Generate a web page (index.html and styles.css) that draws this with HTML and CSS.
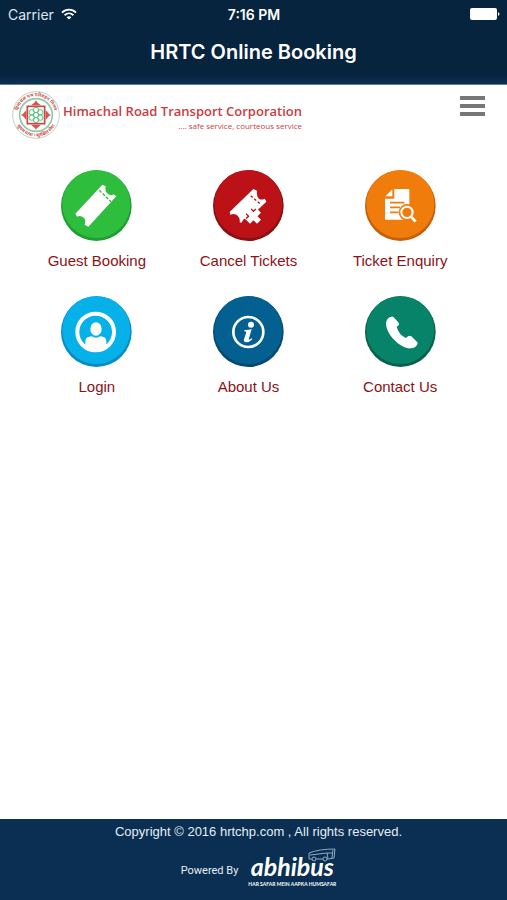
FILE: index.html
```html
<!DOCTYPE html>
<html lang="en">
<head>
  <meta charset="UTF-8">
  <meta name="viewport" content="width=device-width, initial-scale=1">
  <title>HRTC Online Booking</title>
  <link rel="stylesheet" href="styles.css">
</head>
<body>
  <header class="app-header">
    <div class="status-bar">
      <span class="carrier">Carrier
        <svg class="wifi" viewBox="0 0 16 12" aria-hidden="true">
          <path d="M1 4.6C5 .6 11 .6 15 4.6M3.6 7.2c2.6-2.5 6.2-2.5 8.8 0" fill="none" stroke="#fff" stroke-width="1.9"/>
          <path d="M5.6 9.2c1.4-1.3 3.4-1.3 4.8 0L8 11.6z" fill="#fff"/>
        </svg>
      </span>
      <span class="time">7:16 PM</span>
      <svg class="battery" viewBox="0 0 30 12" aria-hidden="true">
        <rect width="27" height="12" rx="2" fill="#fff"/>
        <path d="M28 4c2 1 2 3 0 4z" fill="#fff"/>
      </svg>
    </div>
    <h1>HRTC Online Booking</h1>
  </header>

  <div class="brand-bar">
    <a href="#" class="brand">
      <svg class="emblem" viewBox="0 0 144 144" aria-hidden="true">
        <defs>
          <path id="arcTop" d="M16 72a56 56 0 0 1 112 0"/>
          <path id="arcBottom" d="M7 72a65 65 0 0 0 130 0"/>
        </defs>
        <circle cx="72" cy="72" r="70" fill="none" stroke="#b5d6c0" stroke-width="3"/>
        <circle cx="72" cy="72" r="49" fill="none" stroke="#8ccba6" stroke-width="5"/>
        <text class="emblem-text"><textPath href="#arcTop" startOffset="50%">हिमाचल पथ परिवहन निगम</textPath></text>
        <text class="emblem-text"><textPath href="#arcBottom" startOffset="50%">सुगम यात्रा । सुरक्षित सेवा</textPath></text>
        <path d="M72 27c3 9 9 9 14 16H58c5-7 11-7 14-16zM72 117c3-9 9-9 14-16H58c5 7 11 7 14 16zM27 72c9-3 9-9 16-14v28c-7-5-7-11-16-14zM117 72c-9-3-9-9-16-14v28c7-5 7-11 16-14z" fill="#d9534f"/>
        <rect x="46" y="46" width="52" height="52" fill="#f4fbf5" stroke="#d04545" stroke-width="5"/>
        <g fill="none" stroke="#5cc08a" stroke-width="3">
          <circle cx="72" cy="72" r="8"/>
          <circle cx="72" cy="57" r="8"/>
          <circle cx="72" cy="87" r="8"/>
          <circle cx="59" cy="64" r="8"/>
          <circle cx="85" cy="64" r="8"/>
          <circle cx="59" cy="80" r="8"/>
          <circle cx="85" cy="80" r="8"/>
        </g>
      </svg>
      <span class="brand-text">
        <span class="brand-name">Himachal Road Transport Corporation</span>
        <span class="brand-tagline">.... safe service, courteous service</span>
      </span>
    </a>
    <button type="button" class="menu-button" aria-label="Menu">
      <span></span><span></span><span></span>
    </button>
  </div>

  <main>
    <nav class="tiles">
      <a href="#" class="tile">
        <svg viewBox="0 0 213 213" aria-hidden="true">
          <circle cx="106" cy="107" r="106" fill="#1f9e35"/>
          <circle cx="106" cy="102" r="102" fill="#2fbd3d"/>
          <path d="M124 44L134 49Q130 66 142 72Q150 79 158 73L166 79L82 170L71 164Q76 150 68 143Q59 135 48 140L43 131Z" fill="#fff"/>
          <path d="M115 61l35 34" stroke="#2fbd3d" stroke-width="4" stroke-dasharray="9 5"/>
        </svg>
        <span>Guest Booking</span>
      </a>
      <a href="#" class="tile">
        <svg viewBox="0 0 213 213" aria-hidden="true">
          <circle cx="106" cy="107" r="106" fill="#8a1014"/>
          <circle cx="106" cy="102" r="102" fill="#bb1117"/>
          <path d="M121 57L132 62Q130 80 138 86Q145 91 155 86L160 95L103 150L93 146L85 158L80 157Q82 144 74 137Q66 129 52 134L50 126Z" fill="#fff"/>
          <path d="M113 77l32 28" stroke="#bb1117" stroke-width="4" stroke-dasharray="8 6"/>
          <path d="M107 124l29 29M136 124l-29 29" stroke="#bb1117" stroke-width="25"/>
          <path d="M105 122l33 33M138 122l-33 33" stroke="#fff" stroke-width="17"/>
        </svg>
        <span>Cancel Tickets</span>
      </a>
      <a href="#" class="tile">
        <svg viewBox="0 0 213 213" aria-hidden="true">
          <circle cx="106" cy="107" r="106" fill="#c65f0a"/>
          <circle cx="106" cy="102" r="102" fill="#f07c0c"/>
          <path d="M88 57h42q3 0 3 3v86q0 3-3 3H63q-3 0-3-3V86h25q3 0 3-3z" fill="#fff"/>
          <path d="M82 58v21H61z" fill="#fff"/>
          <path d="M75 98h43M75 112h30M75 127h25" stroke="#f07c0c" stroke-width="5"/>
          <circle cx="126" cy="127" r="25" fill="#f07c0c"/>
          <path d="M142 143l10 11" stroke="#f07c0c" stroke-width="16"/>
          <circle cx="126" cy="127" r="17" fill="#f07c0c" stroke="#fff" stroke-width="6"/>
          <path d="M139 141l13 14" stroke="#fff" stroke-width="8"/>
        </svg>
        <span>Ticket Enquiry</span>
      </a>
      <a href="#" class="tile">
        <svg viewBox="0 0 213 213" aria-hidden="true">
          <circle cx="106" cy="107" r="106" fill="#078bc0"/>
          <circle cx="106" cy="102" r="102" fill="#06b1ea"/>
          <circle cx="104" cy="108" r="55" fill="none" stroke="#fff" stroke-width="12"/>
          <ellipse cx="105" cy="99" rx="17" ry="20" fill="#fff"/>
          <path d="M73 154v-17q0-13 12-15l7-1q13 8 26 0l7 1q11 2 11 15v17q-30 20-63 0z" fill="#fff"/>
        </svg>
        <span>Login</span>
      </a>
      <a href="#" class="tile">
        <svg viewBox="0 0 213 213" aria-hidden="true">
          <circle cx="106" cy="107" r="106" fill="#044a70"/>
          <circle cx="106" cy="102" r="102" fill="#056092"/>
          <circle cx="106" cy="108" r="45" fill="none" stroke="#fff" stroke-width="8"/>
          <circle cx="114" cy="86" r="9" fill="#fff"/>
          <path d="M94 102q13 1 22-3l-9 31q0 3 9-3l2 3q-9 9-18 9t-7-9l7-21q0-3-6-3z" fill="#fff"/>
        </svg>
        <span>About Us</span>
      </a>
      <a href="#" class="tile">
        <svg viewBox="0 0 213 213" aria-hidden="true">
          <circle cx="106" cy="107" r="106" fill="#056149"/>
          <circle cx="106" cy="102" r="102" fill="#07836a"/>
          <path d="M79 62q-15 3-16 20c0 36 46 78 75 75q15-2 20-14 0-4-4-7l-15-15q-5-4-10 0l-6 5q-22-10-28-34l6-4q2-4 0-8l-15-16q-4-3-7-2z" fill="#fff"/>
        </svg>
        <span>Contact Us</span>
      </a>
    </nav>
  </main>

  <footer>
    <p class="copyright">Copyright © 2016 hrtchp.com , All rights reserved.</p>
    <div class="powered">
      <span class="powered-label">Powered By</span>
      <a href="#" class="abhibus">
        <span class="abhibus-name">abhibus</span>
        <span class="abhibus-tagline">HAR SAFAR MEIN AAPKA HUMSAFAR</span>
        <svg class="bus" viewBox="0 0 28 14" aria-hidden="true">
          <path d="M1 5q10-4 26-4l-1 9-6 1H1zM2 7l17-2 6 0M19 5l1 6M25 2l-1 8" fill="none" stroke="#8fa9c2" stroke-width="1"/>
          <circle cx="6" cy="11" r="2" fill="#0a2f52" stroke="#8fa9c2"/>
          <circle cx="17" cy="11" r="2" fill="#0a2f52" stroke="#8fa9c2"/>
        </svg>
      </a>
    </div>
  </footer>
</body>
</html>
```
FILE: styles.css
```css
* {
  box-sizing: border-box;
}
body {
  margin: 0;
  min-height: 100vh;
  display: flex;
  flex-direction: column;
  font-family: "Liberation Sans", Arial, sans-serif;
  background-color: #fff;
}
a {
  text-decoration: none;
}

/* header */
.app-header {
  background: linear-gradient(#07243e 90%, #0c3154);
  border-bottom: 1px solid #5d7a97;
  color: #fff;
  font-family: Inter, sans-serif;
  padding-bottom: 18px;
}
.status-bar {
  display: grid;
  grid-template-columns: 1fr auto 1fr;
  align-items: center;
  height: 28px;
  padding: 0 7px 0 8px;
  font-size: 14px;
}
.carrier {
  display: flex;
  align-items: center;
  gap: 7px;
  color: #dde6ee;
}
.wifi {
  width: 16px;
  height: 12px;
}
.time {
  font-weight: 600;
}
.battery {
  width: 30px;
  height: 12px;
  justify-self: end;
}
h1 {
  margin: 10px 0 0;
  font-size: 20px;
  line-height: 28px;
  font-weight: 600;
  text-align: center;
}

/* logo row */
.brand-bar {
  display: flex;
  justify-content: space-between;
  align-items: flex-start;
  padding: 6px 22px 0 12px;
}
.brand {
  display: flex;
  align-items: center;
  gap: 3px;
  color: #cb3c40;
  font-family: "Open Sans", sans-serif;
}
.emblem {
  width: 48px;
  height: 48px;
}
.emblem-text {
  font-family: "Noto Sans", sans-serif;
  font-size: 14px;
  font-weight: bold;
  fill: #cf5355;
  text-anchor: middle;
}
.brand-text {
  display: flex;
  flex-direction: column;
  align-items: flex-end;
  padding-top: 4px;
}
.brand-name {
  font-size: 13px;
  line-height: 18px;
  font-weight: 600;
}
.brand-tagline {
  font-size: 8px;
  line-height: 12px;
}
.menu-button {
  display: flex;
  flex-direction: column;
  gap: 4px;
  margin-top: 5px;
  padding: 0;
  border: none;
  background: none;
  cursor: pointer;
}
.menu-button span {
  width: 25px;
  height: 4px;
  background-color: #777;
}

/* icons */
main {
  flex: 1;
  padding: 31px 31px 30px 21px;
}
.tiles {
  display: grid;
  grid-template-columns: repeat(3, 1fr);
  row-gap: 25px;
}
.tile {
  display: flex;
  flex-direction: column;
  align-items: center;
  gap: 10px;
  color: #8c1216;
  font-size: 15px;
  line-height: 20px;
}
.tile svg {
  width: 71px;
  height: 71px;
}

/* footer */
footer {
  background-color: #0a2f52;
  color: #e6edf4;
  padding: 4px 0 12px 10px;
  text-align: center;
}
.copyright {
  margin: 0;
  font-size: 13px;
  line-height: 18px;
}
.powered {
  display: flex;
  justify-content: center;
  align-items: center;
  gap: 10px;
  padding-top: 11px;
}
.powered-label {
  font-family: Roboto, sans-serif;
  font-size: 11px;
}
.abhibus {
  position: relative;
  display: flex;
  flex-direction: column;
  align-items: center;
  color: #fff;
  font-family: Lato, sans-serif;
}
.abhibus-name {
  font-size: 25px;
  line-height: 28px;
  font-style: italic;
  font-weight: bold;
}
.abhibus-tagline {
  font-size: 5px;
  line-height: 8px;
  font-weight: bold;
}
.bus {
  position: absolute;
  top: -4px;
  right: 0;
  width: 28px;
  height: 14px;
}
```
